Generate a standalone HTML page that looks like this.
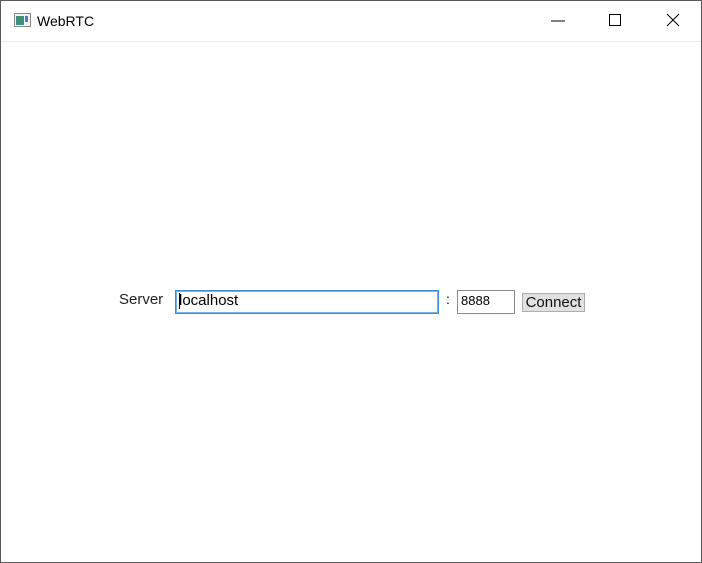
<!DOCTYPE html>
<html><head><style>
body{margin:0;width:702px;height:563px;overflow:hidden;background:#fff;font-family:"Liberation Sans",sans-serif;}
.win{position:absolute;left:0;top:0;width:700px;height:561px;border:1px solid #5a5a5a;}
.title{position:absolute;left:0;top:0;width:700px;height:40px;border-bottom:1px solid #ececec;}
.t{position:absolute;left:36px;top:12px;font-size:14px;color:#000;}
.abs{position:absolute;}
</style></head><body>
<div class="win">
<div class="title">
<svg class="abs" style="left:13px;top:12px" width="18" height="16"><rect x="0.5" y="0.5" width="16" height="13" fill="#f2f2f2" stroke="#8a8a8a"/><rect x="2" y="3" width="8" height="9" fill="#3f8f7f"/><rect x="11" y="3" width="3" height="6" fill="#4a80c0"/></svg>
<div class="t">WebRTC</div>
<svg class="abs" style="left:545px;top:10px" width="140" height="20"><line x1="5" y1="10" x2="19" y2="10" stroke="#000" stroke-width="1"/><rect x="63.5" y="3.5" width="11" height="11" fill="none" stroke="#000"/><path d="M121 3 L133 15 M133 3 L121 15" stroke="#000" stroke-width="1"/></svg>
</div>
<div class="abs" style="left:118px;top:290px;font-size:15px;color:#222">Server</div>
<div class="abs" style="left:174px;top:289px;width:262px;height:22px;border:1px solid #3d8fd8;box-shadow:inset 0 0 0 1px #6fb0e8;"></div>
<div class="abs" style="left:178px;top:291px;font-size:15px;color:#000">localhost</div>
<div class="abs" style="left:178px;top:292px;width:1px;height:16px;background:#000"></div>
<div class="abs" style="left:445px;top:290px;font-size:14px">:</div>
<div class="abs" style="left:456px;top:289px;width:56px;height:22px;border:1px solid #8a8a8a;"></div>
<div class="abs" style="left:460px;top:292px;font-size:13px;color:#000">8888</div>
<div class="abs" style="left:521px;top:292px;width:61px;height:17px;background:#e1e1e1;border:1px solid #adadad;font-size:15px;line-height:17px;text-align:center;color:#111">Connect</div>
</div>
</body></html>
